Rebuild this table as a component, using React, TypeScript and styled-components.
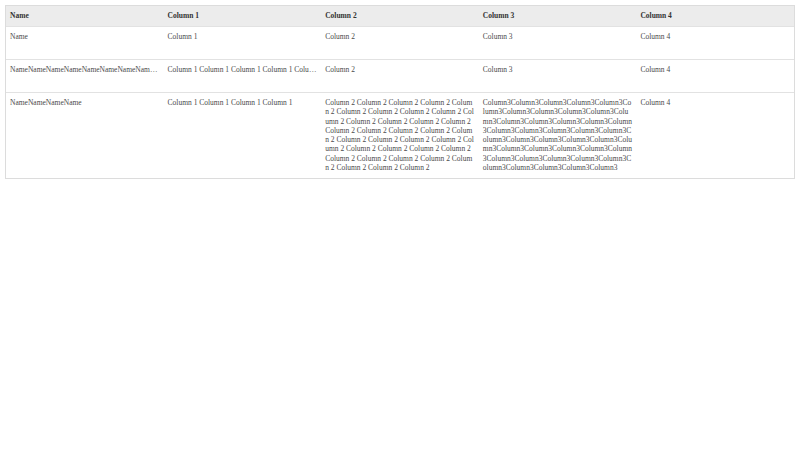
import React from "react";
import styled, { createGlobalStyle } from "styled-components";

const Global = createGlobalStyle`
  html, body { margin: 0; padding: 0; background: #fff; }
  body { font-family: "Liberation Serif", "Times New Roman", serif; }
`;

const Page = styled.div`
  padding: 5px 5px 0 5px;
`;

const Table = styled.div`
  border: 1px solid #dcdcdc;
  display: flex;
  flex-direction: column;
`;

const Row = styled.div<{ $header?: boolean }>`
  display: grid;
  grid-template-columns: repeat(5, minmax(0, 1fr));
  background: ${(p) => (p.$header ? "#ececec" : "#fff")};
  min-height: ${(p) => (p.$header ? "20px" : "33px")};
  border-top: ${(p) => (p.$header ? "none" : "1px solid #e2e2e2")};
  box-sizing: border-box;
`;

const Cell = styled.div<{ $header?: boolean; $wrap?: boolean }>`
  min-width: 0;
  padding: ${(p) => (p.$header ? "5px 4px" : "5px 4px 6px 4px")};
  font-size: 7.5px;
  line-height: 9.3px;
  font-weight: ${(p) => (p.$header ? 700 : 400)};
  color: ${(p) => (p.$header ? "#333" : "#4a4a4a")};
  ${(p) =>
    p.$wrap
      ? "word-break: break-all; white-space: normal;"
      : "white-space: nowrap; overflow: hidden; text-overflow: ellipsis;"}
`;

const cols = ["Name", "Column 1", "Column 2", "Column 3", "Column 4"];
const wrapCols = [false, false, true, true, true];

const rows: string[][] = [
  ["Name", "Column 1", "Column 2", "Column 3", "Column 4"],
  [
    "NameNameNameNameNameNameNameNameNameNameName",
    "Column 1 Column 1 Column 1 Column 1 Column 1 Column 1",
    "Column 2",
    "Column 3",
    "Column 4",
  ],
  [
    "NameNameNameName",
    "Column 1 Column 1 Column 1 Column 1",
    Array(36).fill("Column 2").join(" "),
    "Column3".repeat(42),
    "Column 4",
  ],
];

export default function App() {
  return (
    <Page>
      <Global />
      <Table>
        <Row $header>
          {cols.map((c) => (
            <Cell key={c} $header>
              {c}
            </Cell>
          ))}
        </Row>
        {rows.map((r, i) => (
          <Row key={i}>
            {r.map((v, j) => (
              <Cell key={j} $wrap={wrapCols[j]}>
                {v}
              </Cell>
            ))}
          </Row>
        ))}
      </Table>
    </Page>
  );
}
